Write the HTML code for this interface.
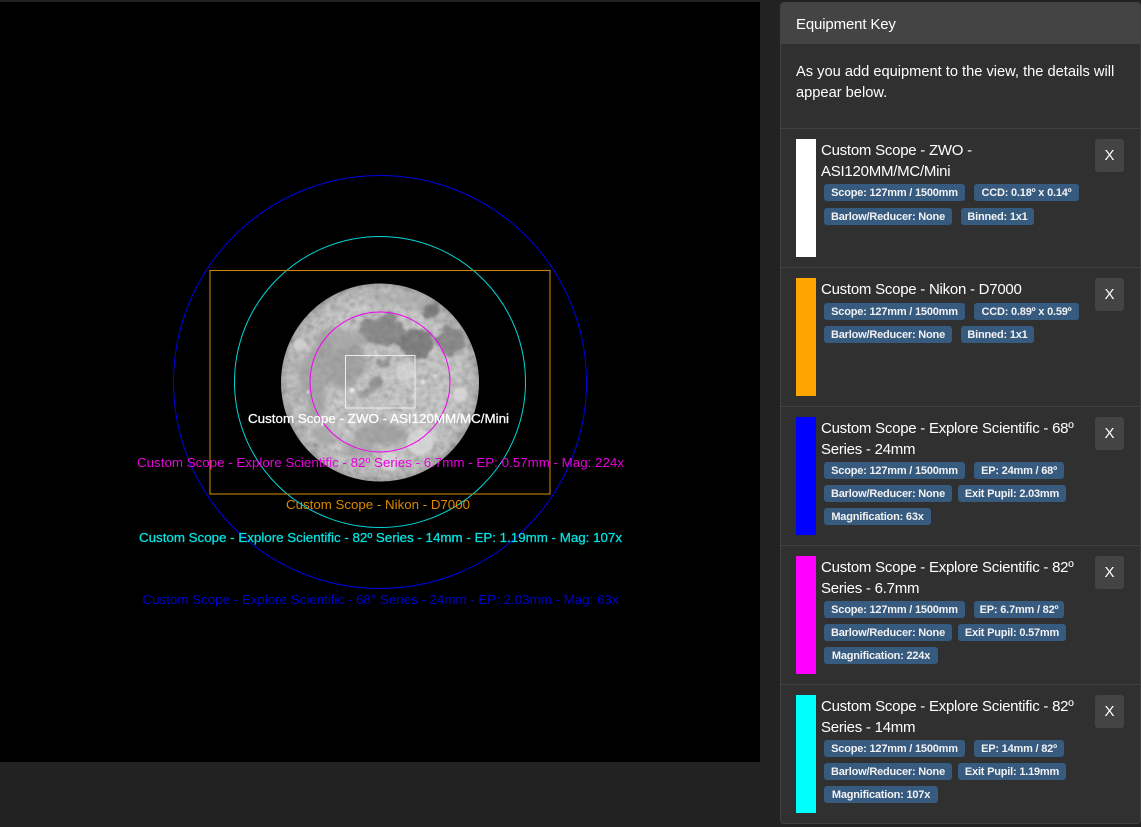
<!DOCTYPE html>
<html><head><meta charset="utf-8"><style>
html,body{margin:0;padding:0;background:#222;width:1141px;height:827px;overflow:hidden;font-family:"Liberation Sans",sans-serif}
#cv{position:absolute;left:0;top:2px;width:760px;height:760px;background:#000}
#cv svg{display:block}
#p{position:absolute;left:780px;top:2px;width:359px;height:820px;background:#303030;border:1px solid #424242;border-radius:4px;overflow:hidden;box-sizing:content-box}
#h{position:absolute;left:0;top:0;width:359px;height:41px;background:#444;color:#fff;font-size:15px;letter-spacing:-.15px;line-height:43px;text-indent:15px}
#d{position:absolute;left:15px;top:59px;color:#fff;font-size:14.65px;line-height:21px;white-space:nowrap}
.i{position:absolute;left:0;width:359px;height:138px;border-top:1px solid #424242}
.s{position:absolute;left:15px;top:10px;width:20px;height:118px}
.t{position:absolute;left:40px;top:11px;color:#fff;font-size:15px;letter-spacing:-.25px;line-height:21px;white-space:nowrap}
.x{position:absolute;left:314px;top:10px;width:29px;height:33px;background:#444;border-radius:3px;color:#fff;font-size:15px;line-height:34px;text-align:center}
.b{position:absolute;height:17px;background:#375a7f;border-radius:3px;color:#f2f2f2;font-size:11px;letter-spacing:-.2px;font-weight:bold;line-height:18px;text-align:center;white-space:nowrap}
</style></head><body>
<div id="cv"><svg width="760" height="760" viewBox="0 2 760 760" xmlns="http://www.w3.org/2000/svg">
<defs>
<radialGradient id="mg" cx="50%" cy="50%" r="50%"><stop offset="0" stop-color="#c2c2c2"/><stop offset=".8" stop-color="#c0c0c0"/><stop offset=".94" stop-color="#aeaeae"/><stop offset="1" stop-color="#8e8e8e"/></radialGradient>
<filter id="rough" x="-30%" y="-30%" width="160%" height="160%">
<feTurbulence type="fractalNoise" baseFrequency=".07" numOctaves="3" seed="4" result="n"/>
<feDisplacementMap in="SourceGraphic" in2="n" scale="14" xChannelSelector="R" yChannelSelector="G"/>
<feGaussianBlur stdDeviation="1.2"/>
</filter>
<filter id="rough2" x="-30%" y="-30%" width="160%" height="160%">
<feTurbulence type="fractalNoise" baseFrequency=".05" numOctaves="3" seed="9" result="n"/>
<feDisplacementMap in="SourceGraphic" in2="n" scale="22" xChannelSelector="G" yChannelSelector="R"/>
<feGaussianBlur stdDeviation="3"/>
</filter>
<filter id="noise" x="0" y="0" width="100%" height="100%">
<feTurbulence type="fractalNoise" baseFrequency=".16" numOctaves="2" seed="7"/>
<feColorMatrix type="matrix" values="1 0 0 0 0  1 0 0 0 0  1 0 0 0 0  0 0 0 0 1"/>
</filter>
<filter id="b1" x="-80%" y="-80%" width="260%" height="260%"><feGaussianBlur stdDeviation="1"/></filter>
<clipPath id="mc"><circle cx="380" cy="382.5" r="99"/></clipPath>
</defs>
<circle cx="380" cy="382.5" r="99" fill="url(#mg)"/>
<g clip-path="url(#mc)">
<g filter="url(#rough2)">
<ellipse cx="335" cy="360" rx="28" ry="30" fill="#999"/>
<ellipse cx="316" cy="388" rx="17" ry="33" fill="#9c9c9c"/>
<ellipse cx="352" cy="338" rx="20" ry="12" fill="#a2a2a2"/>
<ellipse cx="383" cy="432" rx="26" ry="13" fill="#9a9a9a"/>
<ellipse cx="360" cy="449" rx="16" ry="9" fill="#9e9e9e"/>
<ellipse cx="325" cy="434" rx="13" ry="9" fill="#a2a2a2"/>
<ellipse cx="405" cy="300" rx="30" ry="6" fill="#a6a6a6"/>
</g>
<g filter="url(#rough)">
<ellipse cx="432" cy="309" rx="11" ry="8" fill="#727272"/>
<ellipse cx="383" cy="330" rx="21" ry="16" fill="#808080"/>
<ellipse cx="416" cy="344" rx="19" ry="14" fill="#747474"/>
<ellipse cx="449" cy="341" rx="12" ry="15" fill="#808080"/>
<ellipse cx="386" cy="361" rx="9" ry="4" fill="#8c8c8c"/>
<ellipse cx="375" cy="384" rx="7" ry="6" fill="#888"/>
<ellipse cx="365" cy="392" rx="9" ry="4" fill="#969696"/>
<ellipse cx="352" cy="352" rx="5" ry="8" fill="#969696"/>
<ellipse cx="317" cy="446" rx="4" ry="3" fill="#7e7e7e"/>
</g>
<g filter="url(#b1)">
<circle cx="405" cy="372" r="9" fill="#d4d4d4" opacity=".7"/>
<circle cx="390" cy="462" r="9" fill="#d8d8d8" opacity=".8"/>
<circle cx="420" cy="442" r="13" fill="#d6d6d6" opacity=".8"/>
<circle cx="300" cy="345" r="6" fill="#d2d2d2" opacity=".8"/>
<circle cx="460" cy="395" r="7" fill="#d6d6d6" opacity=".8"/>
<circle cx="352" cy="390" r="2.5" fill="#f0f0f0"/>
<circle cx="308" cy="392" r="1.3" fill="#fff"/>
<circle cx="423" cy="382" r="2" fill="#e8e8e8"/>
<circle cx="435" cy="376" r="1.5" fill="#e8e8e8"/>
<circle cx="412" cy="372" r="1.5" fill="#e8e8e8"/>
</g>
<rect x="280" y="282" width="200" height="200" filter="url(#noise)" style="mix-blend-mode:soft-light" opacity=".35"/>
</g>
<g fill="none" stroke-width="1">
<circle cx="380" cy="382" r="206.5" stroke="#0000e8"/>
<circle cx="380" cy="382" r="145.5" stroke="#00d8d8"/>
<circle cx="380" cy="382" r="70" stroke="#f000f0"/>
<rect x="210" y="270.5" width="340" height="223.5" stroke="#c4820f" stroke-width="1.1"/>
<rect x="345.5" y="355.5" width="69.5" height="52.5" stroke="#ececec"/>
</g>
<g font-family="'Liberation Sans',sans-serif" font-size="12.5" text-anchor="middle">
<text x="378.5" y="423" fill="#fff" stroke="#fff" stroke-width=".25" textLength="261" lengthAdjust="spacingAndGlyphs" font-size="13">Custom Scope - ZWO - ASI120MM/MC/Mini</text>
<text x="380.5" y="467" fill="#e800dc" textLength="487" lengthAdjust="spacingAndGlyphs">Custom Scope - Explore Scientific - 82º Series - 6.7mm - EP: 0.57mm - Mag: 224x</text>
<text x="378" y="509" fill="#dc8800" textLength="184" lengthAdjust="spacingAndGlyphs">Custom Scope - Nikon - D7000</text>
<text x="380.5" y="542" fill="#00e4e4" stroke="#00e4e4" stroke-width=".25" textLength="483" lengthAdjust="spacingAndGlyphs">Custom Scope - Explore Scientific - 82º Series - 14mm - EP: 1.19mm - Mag: 107x</text>
<text x="380.5" y="604" fill="#0000d0" textLength="476" lengthAdjust="spacingAndGlyphs">Custom Scope - Explore Scientific - 68° Series - 24mm - EP: 2.03mm - Mag: 63x</text>
</g>
</svg></div>

<div id="p">
<div id="h">Equipment Key</div>
<div id="d">As you add equipment to the view, the details will<br>appear below.</div>

<div class="i" style="top:125px">
<div class="s" style="background:#fff"></div>
<div class="t">Custom Scope - ZWO -<br>ASI120MM/MC/Mini</div>
<div class="x">X</div>
<div class="b" style="left:43px;top:55px;width:141px">Scope: 127mm / 1500mm</div>
<div class="b" style="left:193px;top:55px;width:105px">CCD: 0.18º x 0.14º</div>
<div class="b" style="left:43px;top:79px;width:128px">Barlow/Reducer: None</div>
<div class="b" style="left:180px;top:79px;width:73px">Binned: 1x1</div>
</div>

<div class="i" style="top:264px">
<div class="s" style="background:#ffa500"></div>
<div class="t">Custom Scope - Nikon - D7000</div>
<div class="x">X</div>
<div class="b" style="left:43px;top:35px;width:141px">Scope: 127mm / 1500mm</div>
<div class="b" style="left:193px;top:35px;width:105px">CCD: 0.89º x 0.59º</div>
<div class="b" style="left:43px;top:58px;width:128px">Barlow/Reducer: None</div>
<div class="b" style="left:180px;top:58px;width:73px">Binned: 1x1</div>
</div>

<div class="i" style="top:403px">
<div class="s" style="background:#0000ff"></div>
<div class="t">Custom Scope - Explore Scientific - 68º<br>Series - 24mm</div>
<div class="x">X</div>
<div class="b" style="left:43px;top:55px;width:141px">Scope: 127mm / 1500mm</div>
<div class="b" style="left:193px;top:55px;width:90px">EP: 24mm / 68º</div>
<div class="b" style="left:43px;top:78px;width:128px">Barlow/Reducer: None</div>
<div class="b" style="left:177px;top:78px;width:108px">Exit Pupil: 2.03mm</div>
<div class="b" style="left:43px;top:101px;width:107px">Magnification: 63x</div>
</div>

<div class="i" style="top:542px">
<div class="s" style="background:#ff00ff"></div>
<div class="t">Custom Scope - Explore Scientific - 82º<br>Series - 6.7mm</div>
<div class="x">X</div>
<div class="b" style="left:43px;top:55px;width:141px">Scope: 127mm / 1500mm</div>
<div class="b" style="left:193px;top:55px;width:90px">EP: 6.7mm / 82º</div>
<div class="b" style="left:43px;top:78px;width:128px">Barlow/Reducer: None</div>
<div class="b" style="left:177px;top:78px;width:108px">Exit Pupil: 0.57mm</div>
<div class="b" style="left:43px;top:101px;width:114px">Magnification: 224x</div>
</div>

<div class="i" style="top:681px">
<div class="s" style="background:#00ffff"></div>
<div class="t">Custom Scope - Explore Scientific - 82º<br>Series - 14mm</div>
<div class="x">X</div>
<div class="b" style="left:43px;top:55px;width:141px">Scope: 127mm / 1500mm</div>
<div class="b" style="left:193px;top:55px;width:90px">EP: 14mm / 82º</div>
<div class="b" style="left:43px;top:78px;width:128px">Barlow/Reducer: None</div>
<div class="b" style="left:177px;top:78px;width:108px">Exit Pupil: 1.19mm</div>
<div class="b" style="left:43px;top:101px;width:114px">Magnification: 107x</div>
</div>
</div>
</body></html>
